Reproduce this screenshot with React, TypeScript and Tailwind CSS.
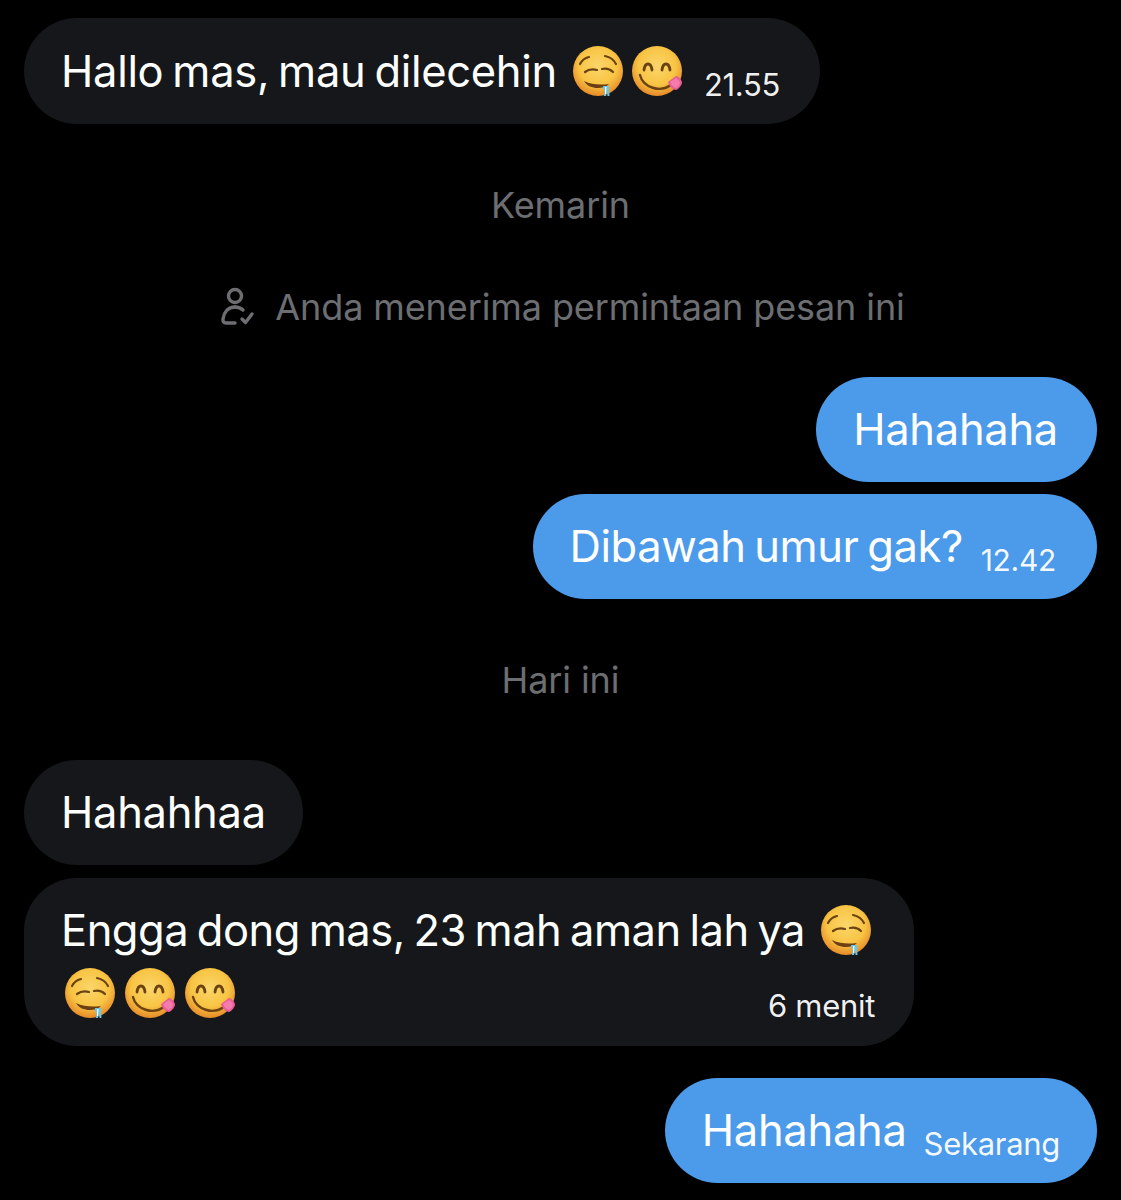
import { useId } from "react";

const font = { fontFamily: "Inter, 'Noto Sans', sans-serif" };

const Face = ({ children }: { children: React.ReactNode }) => {
  const id = useId();
  return (
    <svg viewBox="0 0 52 52" className="h-[52px] w-[52px] shrink-0">
      <defs>
        <radialGradient id={id} cx="50%" cy="40%" r="58%">
          <stop offset="0%" stopColor="#fbd66a" />
          <stop offset="65%" stopColor="#f8c444" />
          <stop offset="100%" stopColor="#e78f2b" />
        </radialGradient>
      </defs>
      <circle cx="26" cy="26" r="25" fill={`url(#${id})`} />
      {children}
    </svg>
  );
};

// drooling face
const DroolEmoji = () => (
  <Face>
    <g fill="none" stroke="#6b4212" strokeWidth="2.200" strokeLinecap="round">
      <path d="M8 19c2-4 5-6 9-7" />
      <path d="M33 11c5 1 9 4 11 8" />
      <path d="M13 27c4-3 8-3 12-2" />
      <path d="M30 24c4-1 8 0 11 3" />
    </g>
    <path d="M12 36c8 4 17 4 25 3-3 3-7 4-11 4-6 0-11-2-14-7z" fill="#6b3f12" />
    <path d="M31 41h6l.5 10h-2l-.5-5-1 5h-2l.5-6-1.500-1z" fill="#6fc4e2" />
    <path d="M33 42h1.500l-.5 7h-1z" fill="#e8fbff" />
  </Face>
);

// face savoring food
const YumEmoji = () => (
  <Face>
    <g fill="none" stroke="#6b4212" strokeLinecap="round">
      <path d="M13 25c1-8 7-8 8 0" strokeWidth="2.800" />
      <path d="M31 25c1-8 7-8 8 0" strokeWidth="2.800" />
      <path d="M9 30c3 12 20 19 32 9" strokeWidth="2.400" />
    </g>
    <path d="M37 37l8-6c2 0 5 3 6 6 0 3-3 7-6 8-3 0-7-4-8-8z" fill="#ea5d95" />
    <path d="M39 37l6-4c2 1 3 3 4 5-1 2-2 4-4 5-3-1-5-4-6-6z" fill="#f27cae" />
  </Face>
);

const Bubble = ({
  mine,
  children,
  className = "",
}: {
  mine?: boolean;
  children: React.ReactNode;
  className?: string;
}) => (
  <div
    className={`flex rounded-[53px] pl-[37px] text-[43.500px] leading-[52px] text-white ${
      mine ? "self-end bg-[#4c9aea]" : "self-start bg-[#15171a]"
    } ${className}`}
  >
    {children}
  </div>
);

const Time = ({ children, className = "text-[31px]" }: { children: React.ReactNode; className?: string }) => (
  <span className={`leading-none text-white/95 ${className}`}>{children}</span>
);

const Divider = ({ children, className = "" }: { children: React.ReactNode; className?: string }) => (
  <div
    className={`flex items-center justify-center text-[36px] leading-[40px] tracking-[-0.1px] text-[#6c6e71] [word-spacing:0px] ${className}`}
  >
    {children}
  </div>
);

export default function App() {
  return (
    <div
      style={font}
      className="flex h-[1200px] flex-col overflow-hidden bg-black px-[24px] pt-[18px] tracking-[-0.3px] [word-spacing:-3px]"
    >
      <Bubble className="h-[106px] w-[796px] items-center">
        <span className="whitespace-nowrap">Hallo mas, mau dilecehin</span>
        <span className="ml-[15px] flex gap-[7px]">
          <DroolEmoji />
          <YumEmoji />
        </span>
        <Time className="ml-[21px] mt-[26px] text-[31px]">21.55</Time>
      </Bubble>

      <Divider className="mt-[61px]">Kemarin</Divider>

      <Divider className="mt-[62px] gap-[20px] pl-[3px]">
        <svg
          viewBox="0 0 36 40"
          className="h-[40px] w-[36px]"
          fill="none"
          stroke="#6c6e71"
          strokeWidth="3.400"
          strokeLinecap="round"
          strokeLinejoin="round"
        >
          <circle cx="16" cy="9" r="6.500" />
          <path d="M16 20c-7 0-11 5-12 12-.3 2 .5 4 3 4h9" />
          <path d="M16 20c3 0 6 1 8 3" />
          <path d="M23 32l3.500 3.500L33 27" />
        </svg>
        <span>Anda menerima permintaan pesan ini</span>
      </Divider>

      <Bubble mine className="mt-[50px] h-[105px] items-center pb-[2px] pr-[39px]">
        Hahahaha
      </Bubble>

      <Bubble mine className="mt-[12px] h-[105px] items-center pb-[2px] pr-[41px]">
        <span className="tracking-[-0.45px]">Dibawah umur gak?</span>
        <Time className="ml-[18px] mt-[28px] text-[30px]">12.42</Time>
      </Bubble>

      <Divider className="mt-[61px]">Hari ini</Divider>

      <Bubble className="mt-[60px] h-[105px] items-center pb-[2px] pr-[37px]">Hahahhaa</Bubble>

      <div className="mt-[13px] flex h-[168px] w-[890px] flex-col rounded-[53px] bg-[#15171a] pl-[37px] pr-[39px] pt-[26px] text-[43.500px] leading-[52px] text-white">
        <div className="flex items-center">
          <span className="whitespace-nowrap tracking-[-0.5px]">Engga dong mas, 23 mah aman lah ya</span>
          <span className="ml-[15px]">
            <DroolEmoji />
          </span>
        </div>
        <div className="mt-[11px] flex items-start justify-between">
          <span className="ml-[3px] flex gap-[8px]">
            <DroolEmoji />
            <YumEmoji />
            <YumEmoji />
          </span>
          <Time className="mt-[23px] text-[31px] [word-spacing:0px]">6 menit</Time>
        </div>
      </div>

      <Bubble mine className="mt-[32px] h-[105px] items-center pb-[2px] pr-[37px]">
        <span>Hahahaha</span>
        <Time className="ml-[17px] mt-[28px] text-[31px]">Sekarang</Time>
      </Bubble>
    </div>
  );
}
